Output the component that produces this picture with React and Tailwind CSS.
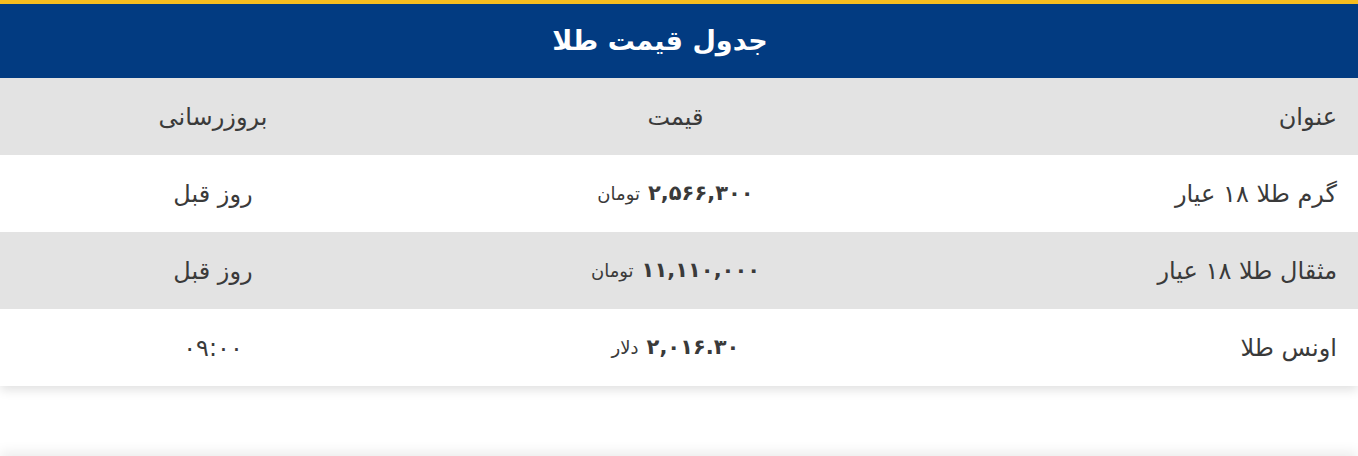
const rows = [
  { title: "گرم طلا ۱۸ عیار", price: "۲,۵۶۶,۳۰۰", unit: "تومان", updated: "روز قبل" },
  { title: "مثقال طلا ۱۸ عیار", price: "۱۱,۱۱۰,۰۰۰", unit: "تومان", updated: "روز قبل" },
  { title: "اونس طلا", price: "۲,۰۱۶.۳۰", unit: "دلار", updated: "۰۹:۰۰" },
];

export default function App() {
  return (
    <div
      dir="rtl"
      className="h-[456px] bg-white overflow-hidden"
      style={{ fontFamily: '"DejaVu Sans", sans-serif' }}
    >
      <div className="bg-white shadow-[0_4px_10px_rgba(0,0,0,0.12)]">
        <div className="border-t-4 border-[#f8bd1e] bg-[#023b81] h-[78px] flex items-center justify-center pr-[38px]">
          <h1 className="text-white text-[27px] font-bold">جدول قیمت طلا</h1>
        </div>

        <div className="grid grid-cols-[433px_499px_426px] h-[77px] items-center bg-[#e3e3e3] text-[#3a3a3a] text-[24px]">
          <div className="pr-[21px]">عنوان</div>
          <div className="text-center">قیمت</div>
          <div className="text-center">بروزرسانی</div>
        </div>

        {rows.map((row, i) => (
          <div
            key={row.title}
            className={`grid grid-cols-[433px_499px_426px] h-[77px] items-center text-[#3a3a3a] ${
              i % 2 === 1 ? "bg-[#e3e3e3]" : "bg-white"
            }`}
          >
            <div className="pr-[21px] text-[24px]">{row.title}</div>
            <div className="text-center">
              <span className="text-[21px] font-bold">{row.price}</span>
              <span className="text-[18px] mr-2">{row.unit}</span>
            </div>
            <div className="text-center text-[24px]">{row.updated}</div>
          </div>
        ))}
      </div>

      <div className="mt-[70px] h-[80px] bg-white shadow-[0_-4px_12px_rgba(0,0,0,0.08)]"></div>
    </div>
  );
}
